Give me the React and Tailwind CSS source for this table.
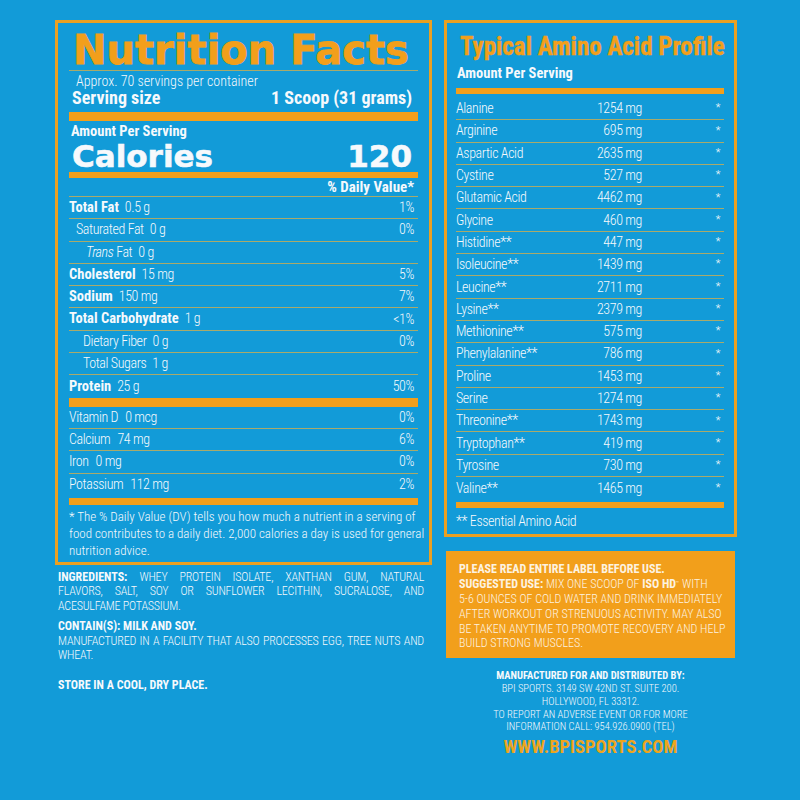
const nutrients = [
  { b: "Total Fat", v: "0.5 g", dv: "1%", pad: "pl-0" },
  { n: "Saturated Fat", v: "0 g", dv: "0%", pad: "pl-[7px]" },
  { trans: true, v: "0 g", dv: "", pad: "pl-[17px]" },
  { b: "Cholesterol", v: "15 mg", dv: "5%", pad: "pl-0" },
  { b: "Sodium", v: "150 mg", dv: "7%", pad: "pl-0" },
  { b: "Total Carbohydrate", v: "1 g", dv: "<1%", pad: "pl-0" },
  { n: "Dietary Fiber", v: "0 g", dv: "0%", pad: "pl-[14px]" },
  { n: "Total Sugars", v: "1 g", dv: "", pad: "pl-[14px]" },
  { b: "Protein", v: "25 g", dv: "50%", pad: "pl-0", last: true },
];

const vitamins = [
  { n: "Vitamin D", v: "0 mcg", dv: "0%" },
  { n: "Calcium", v: "74 mg", dv: "6%" },
  { n: "Iron", v: "0 mg", dv: "0%" },
  { n: "Potassium", v: "112 mg", dv: "2%", last: true },
];

const aminos = [
  ["Alanine", "1254 mg"],
  ["Arginine", "695 mg"],
  ["Aspartic Acid", "2635 mg"],
  ["Cystine", "527 mg"],
  ["Glutamic Acid", "4462 mg"],
  ["Glycine", "460 mg"],
  ["Histidine**", "447 mg"],
  ["Isoleucine**", "1439 mg"],
  ["Leucine**", "2711 mg"],
  ["Lysine**", "2379 mg"],
  ["Methionine**", "575 mg"],
  ["Phenylalanine**", "786 mg"],
  ["Proline", "1453 mg"],
  ["Serine", "1274 mg"],
  ["Threonine**", "1743 mg"],
  ["Tryptophan**", "419 mg"],
  ["Tyrosine", "730 mg"],
  ["Valine**", "1465 mg"],
];

const narrow = { fontFamily: '"Roboto Condensed", "DejaVu Sans Condensed", Roboto, sans-serif' };
const wide = { fontFamily: '"DejaVu Sans", sans-serif' };

// light condensed text used for values on the label
const lite = "font-light tracking-[-0.4px]";

const App = () => {
  return (
    <div
      className="w-[800px] h-[800px] bg-[#129bd8] text-[#f6f9fc] flex gap-[12px] pl-[55px] pt-[20px] overflow-hidden"
      style={narrow}
    >
      {/* Left column */}
      <div className="w-[377px] flex flex-col">
        <div className="border-[3px] border-[#eaa021] px-[11px] pt-[7px] pb-[3px]">
          <div
            className="h-[40px] text-[40px] leading-[40px] font-bold text-[#f29f1b] pl-[4px] [-webkit-text-stroke:0.8px_#f29f1b]"
            style={wide}
          >
            Nutrition Facts
          </div>
          <div className="h-px bg-[#a9aa6b]"></div>
          <div className="h-[20px] leading-[20px] text-[14px] pl-[7px] font-light">Approx. 70 servings per container</div>
          <div className="h-[14px] leading-[14px] text-[18px] font-bold flex justify-between pl-[3px] pr-[6px]">
            <span>Serving size</span>
            <span>1 Scoop (31 grams)</span>
          </div>
          <div className="mt-[7px] h-[9px] bg-[#f29f1b]"></div>
          <div className="h-[18px] pt-[4px] leading-[14px] text-[14.5px] font-bold pl-[2px]">Amount Per Serving</div>
          <div
            className="h-[33px] pt-[3px] leading-[28px] text-[31px] font-bold flex justify-between pl-[3px] pr-[6px] [-webkit-text-stroke:0.6px_#f6f9fc]"
            style={wide}
          >
            <span>Calories</span>
            <span>120</span>
          </div>
          <div className="h-[6px] bg-[#f29f1b]"></div>
          <div className="h-[18px] leading-[18px] text-[15px] font-bold text-right pr-[4px]">% Daily Value*</div>
          <div className="h-px bg-[#a9aa6b]"></div>

          {nutrients.map((row, i) => (
            <div
              key={i}
              className={`h-[22.3px] flex items-center justify-between pr-[4px] ${row.last ? "" : "border-b border-[#a9aa6b]"}`}
            >
              <span className={`${row.pad} text-[14px]`}>
                {row.b && <span className="font-bold text-[14.5px] tracking-normal">{row.b}</span>}
                {row.n && <span className={lite}>{row.n}</span>}
                {row.trans && (
                  <span className={lite}>
                    <i>Trans</i> Fat
                  </span>
                )}
                <span className={`ml-[6px] ${lite}`}>{row.v}</span>
              </span>
              <span className={`text-[14px] ${lite}`}>{row.dv}</span>
            </div>
          ))}

          <div className="h-[9px] bg-[#f29f1b]"></div>

          {vitamins.map((row, i) => (
            <div
              key={i}
              className={`h-[22.3px] flex items-center justify-between text-[14px] pr-[4px] ${lite} ${row.last ? "" : "border-b border-[#a9aa6b]"}`}
            >
              <span>
                {row.n}
                <span className="ml-[7px]">{row.v}</span>
              </span>
              <span>{row.dv}</span>
            </div>
          ))}

          <div className="mt-[2px] h-[7px] bg-[#f29f1b]"></div>
          <div className="pt-[3px] text-[13px] leading-[17px] font-light whitespace-nowrap">
            <div>* The % Daily Value (DV) tells you how much a nutrient in a serving of</div>
            <div>food contributes to a daily diet. 2,000 calories a day is used for general</div>
            <div>nutrition advice.</div>
          </div>
        </div>

        {/* Ingredients */}
        <div className="pl-[3px] pr-[8px] pt-[5px] text-[12px] leading-[14.5px] uppercase tracking-[-0.2px]">
          <div className="text-justify [text-align-last:justify] font-light">
            <span className="font-bold tracking-normal">Ingredients:</span> Whey protein isolate, xanthan gum, natural
          </div>
          <div className="text-justify [text-align-last:justify] font-light">
            flavors, salt, soy or sunflower lecithin, sucralose, and
          </div>
          <div className="font-light">acesulfame potassium.</div>
          <div className="mt-[6px] font-bold tracking-normal">Contain(s): milk and soy.</div>
          <div className="text-justify [text-align-last:justify] font-light">
            Manufactured in a facility that also processes egg, tree nuts and
          </div>
          <div className="font-light">wheat.</div>
          <div className="mt-[15px] font-bold tracking-normal">Store in a cool, dry place.</div>
        </div>
      </div>

      {/* Right column */}
      <div className="w-[293px] flex flex-col">
        <div className="border-[3px] border-[#eaa021] pl-[9px] pr-[10px]">
          <div className="h-[42px] pt-[9px] text-[25px] leading-[30px] font-bold text-[#f29f1b] pl-[4px] whitespace-nowrap [-webkit-text-stroke:0.4px_#f29f1b]">
            Typical Amino Acid Profile
          </div>
          <div className="h-[17px] leading-[17px] text-[14.5px] font-bold pl-[1px]">Amount Per Serving</div>
          <div className="mt-[6px] h-[6px] bg-[#f29f1b]"></div>
          <div className="mt-[4px]">
            {aminos.map(([name, amt], i) => (
              <div
                key={name}
                className={`h-[22.3px] flex items-center text-[14px] ${lite} ${i === aminos.length - 1 ? "" : "border-b border-[#a9aa6b]"}`}
              >
                <span className="w-[120px]">{name}</span>
                <span className="w-[66px] text-right">{amt}</span>
                <span className="flex-1 text-right pr-[4px] text-[11px]">*</span>
              </div>
            ))}
          </div>
          <div className="mt-[3px] h-[6px] bg-[#f29f1b]"></div>
          <div className={`h-[26px] leading-[26px] text-[14px] ${lite}`}>** Essential Amino Acid</div>
        </div>

        <div className="mt-[14px] mx-[2px] h-[107px] bg-[#f29f1b] text-[#fdf3e1] pl-[13px] pt-[11px] text-[12px] leading-[14.8px] uppercase whitespace-nowrap">
          <div className="font-bold">Please read entire label before use.</div>
          <div className="font-light">
            <span className="font-bold">Suggested use:</span> Mix one scoop of <span className="font-bold">ISO HD</span>
            <sup className="text-[6px]">™</sup> with
          </div>
          <div className="font-light">5-6 ounces of cold water and drink immediately</div>
          <div className="font-light">after workout or strenuous activity. May also</div>
          <div className="font-light">be taken anytime to promote recovery and help</div>
          <div className="font-light">build strong muscles.</div>
        </div>

        <div className="mt-[12px] text-center text-[10.5px] leading-[12.75px] uppercase">
          <div className="font-bold">Manufactured for and distributed by:</div>
          <div className="font-light">BPI Sports. 3149 SW 42nd St. Suite 200.</div>
          <div className="font-light">Hollywood, FL 33312.</div>
          <div className="font-light">To report an adverse event or for more</div>
          <div className="font-light">information call: 954.926.0900 (tel)</div>
          <div className="mt-[1px] text-[18.5px] leading-[24px] font-bold text-[#eda51e]">WWW.BPISPORTS.COM</div>
        </div>
      </div>
    </div>
  );
};

export default App;
